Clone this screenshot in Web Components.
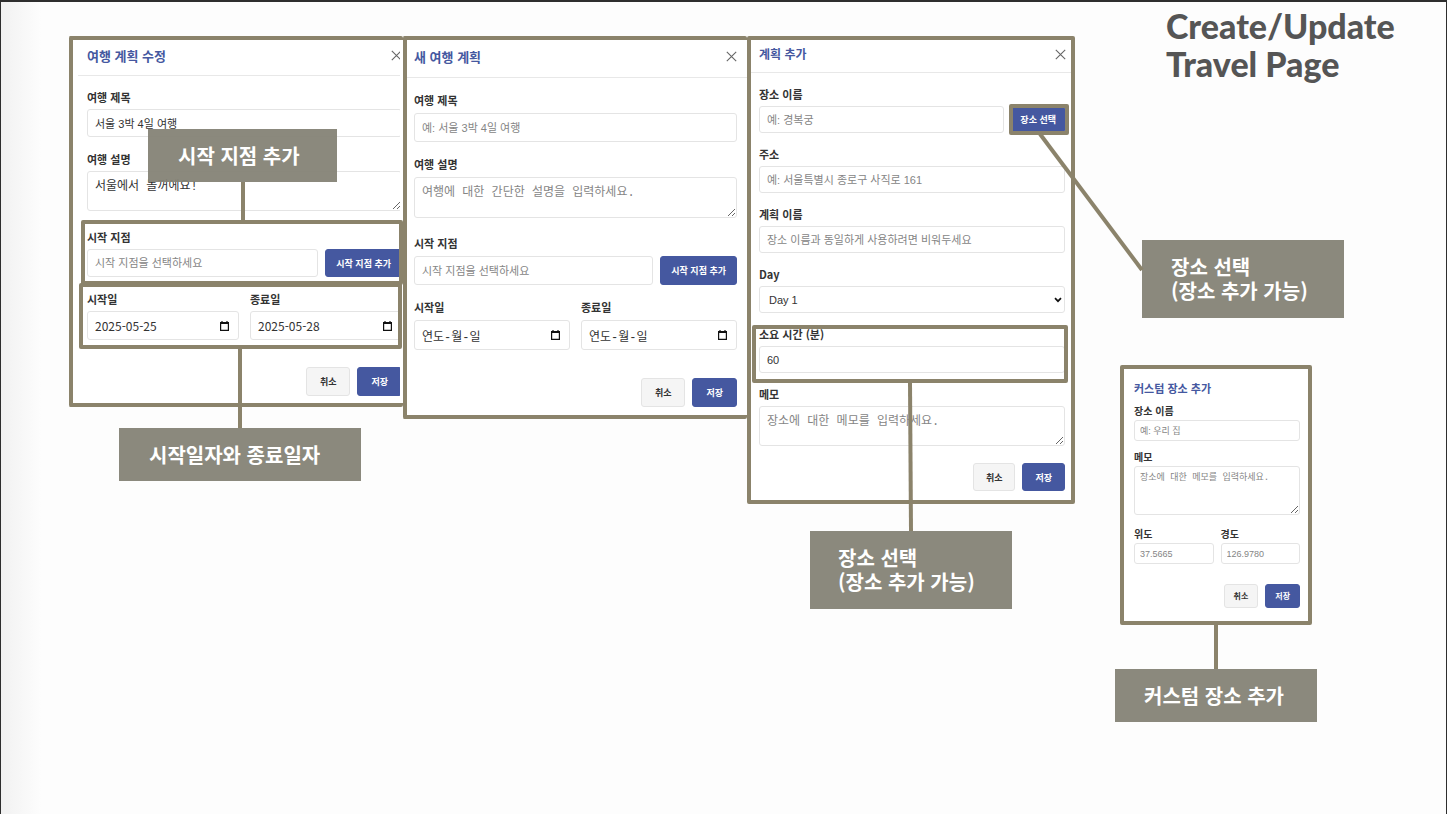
<!DOCTYPE html>
<html lang="ko">
<head>
<meta charset="utf-8">
<title>Create/Update Travel Page</title>
<style>
  html, body { margin: 0; min-height: 100%; }
  body { font-family: "Noto Sans CJK KR", sans-serif; color: #333; background: #fdfdfd; }
</style>
</head>
<body>
<travel-board></travel-board>

<script>
const define = (name, html, setup) => {
  const template = document.createElement('template');
  template.innerHTML = html;
  customElements.define(name, class extends HTMLElement {
    constructor() {
      super();
      this.attachShadow({ mode: 'open' }).append(template.content.cloneNode(true));
    }
    connectedCallback() { if (setup) setup(this, this.shadowRoot); }
  });
};

/* Push button: primary by default, "plain" for the grey one */
define('plan-button', `
  <style>
    :host { display: block; flex: none; }
    button {
      box-sizing: border-box; display: block; height: var(--button-height, 29px); margin: 0;
      padding: 0 var(--button-pad, 13px); border: 1px solid #4558a0; border-radius: 3px;
      background: #4558a0; color: #fff; font: bold var(--button-font, 9px)/1 "Noto Sans CJK KR", sans-serif;
      white-space: nowrap;
    }
    :host([plain]) button { background: #f5f5f5; border-color: #e4e4e4; color: #333; }
  </style>
  <button type="button"><slot></slot></button>`);

/* Label with its control: text, date, select or textarea */
define('form-field', `
  <style>
    :host { display: block; flex: 1; min-width: 0; }
    label {
      display: block; height: var(--label-height, 16px); margin-bottom: var(--label-gap, 4px);
      font-weight: bold; font-size: var(--label-font, 11px); line-height: var(--label-height, 16px); white-space: nowrap;
    }
    .row { display: flex; gap: 7px; }
    .box { position: relative; flex: 1; min-width: 0; }
    input, select, textarea {
      box-sizing: border-box; display: block; width: 100%; height: var(--input-height, 28px); margin: 0;
      padding: 0 7px; border: 1px solid #e4e4e4; border-radius: 3px; background: #fff; color: #333; outline: none;
      font: var(--input-font, 11px) "Liberation Sans", "Noto Sans CJK KR", sans-serif;
    }
    input.small, textarea.small { padding-left: 5px; padding-right: 5px; }
    input::placeholder, textarea::placeholder { color: #858585; opacity: 1; }
    select { appearance: none; padding-left: 9px; }
    textarea {
      height: var(--area-height, 40px); padding-top: 7px; resize: vertical; overflow: hidden;
      font: var(--area-font, 12px)/16px "Liberation Mono", "Noto Sans CJK KR", monospace;
    }
    textarea.small { padding-top: 3px; }
    input.date { height: var(--date-height, 29px); padding-right: 24px; font: 12px "Noto Sans CJK KR", sans-serif; }
    input.date::placeholder { color: #333; font-family: "Liberation Mono", "Noto Sans CJK KR", monospace; }
    .picker { position: absolute; top: 50%; right: 9px; width: 11px; height: 12px; margin-top: -6px; padding: 0; border: 0; background: none; }
    .arrow { position: absolute; top: 50%; right: 3px; width: 8px; height: 6px; margin-top: -3px; pointer-events: none; }
    svg { display: block; }
  </style>
  <label for="control"></label>
  <div class="row"><div class="box"></div><slot></slot></div>`,
(host, root) => {
  const kind = host.getAttribute('kind') || 'text';
  const box = root.querySelector('.box');
  root.querySelector('label').textContent = host.getAttribute('label');
  const control = document.createElement(kind === 'select' ? 'select' : kind === 'area' ? 'textarea' : 'input');
  control.id = 'control';
  const value = host.getAttribute('value');
  if (kind === 'select') {
    control.add(new Option(value));
  } else {
    if (kind !== 'area') control.type = 'text';
    control.placeholder = host.getAttribute('placeholder') || '';
    if (value) control.value = value;
  }
  if (kind === 'date') control.classList.add('date');
  if (host.hasAttribute('small')) control.classList.add('small');
  box.replaceChildren(control);
  if (kind === 'date') box.insertAdjacentHTML('beforeend', `
    <button class="picker" type="button" aria-label="달력"><svg width="11" height="12" viewBox="0 0 11 12">
      <path d="M1.6 2.5h7.8v7.9H1.6z" fill="none" stroke="#111" stroke-width="1.2"/><path d="M1 2h9v2H1zM2.4 1h1.2v1.5H2.4zM7.4 1h1.2v1.5H7.4z" fill="#111"/></svg></button>`);
  if (kind === 'select') box.insertAdjacentHTML('beforeend', `
    <svg class="arrow" viewBox="0 0 8 6"><path d="M1 1.2l3 3 3-3" fill="none" stroke="#111" stroke-width="1.7"/></svg>`);
});

/* Dialog: heading bar with close button, stacked fields, action buttons */
define('plan-dialog', `
  <style>
    :host { display: block; border: 4px solid #8b836b; border-radius: 2px; background: #fff; }
    .clip { overflow: hidden; margin-right: var(--clip, 0px); }
    header {
      box-sizing: border-box; display: flex; align-items: center; justify-content: space-between;
      height: var(--head-height, 36px); margin-left: var(--head-inset, 0px); margin-right: var(--bleed, 0px); border-bottom: 1px solid #e8e8e8;
      padding: 0 var(--head-right, 10px) 4px calc(var(--left, 14px) - var(--head-inset, 0px));
    }
    h2 { margin: 0; color: #4558a0; font-size: var(--head-font, 13px); line-height: 20px; font-weight: bold; }
    header button { width: 11px; height: 11px; padding: 0; border: 0; background: none; }
    svg { display: block; }
    form { display: flex; flex-direction: column; gap: var(--field-gap, 14px); padding: var(--form-top, 13px) var(--right, 0px) 0 var(--left, 14px); margin-right: var(--bleed, 0px); }
    footer { display: flex; justify-content: flex-end; gap: 7px; padding: var(--foot-top, 27px) var(--right, 0px) var(--foot-bottom, 7px) 0; margin-right: var(--bleed, 0px); }
    :host([compact]) header { border: 0; padding: 8px 0 0 10px; }
    :host([compact]) header button { display: none; }
    :host([compact]) form { padding-top: 6px; }
  </style>
  <div class="clip">
    <header><h2></h2><button type="button" aria-label="닫기"><svg width="11" height="11" viewBox="0 0 11 11"><path d="M.8.8l9.4 9.4M10.2.8L.8 10.2" stroke="#666" stroke-width="1.1"/></svg></button></header>
    <form><slot></slot></form>
    <footer><slot name="actions"></slot></footer>
  </div>`,
(host, root) => { root.querySelector('h2').textContent = host.getAttribute('heading'); });

define('field-pair', `
  <style>:host { display: flex; gap: var(--pair-gap, 11px); }</style><slot></slot>`);

define('callout-note', `
  <style>
    :host {
      box-sizing: border-box; display: flex; flex-direction: column; justify-content: center; padding: 15px 30px 14px;
      background: rgba(132, 130, 117, .94); color: #fff; font-weight: bold; font-size: 20px; line-height: 24px; white-space: nowrap;
    }
  </style><slot></slot>`);

define('mark-box', `
  <style>:host { box-sizing: border-box; display: block; border: 4px solid #8b836b; border-radius: 2px; pointer-events: none; }</style>`);

define('link-line', `
  <style>:host { display: block; pointer-events: none; } svg { display: block; overflow: visible; }</style>
  <svg width="1" height="1"><polyline fill="none" stroke="#8b836b" stroke-width="4"/></svg>`,
(host, root) => { root.querySelector('polyline').setAttribute('points', host.getAttribute('points')); });

define('travel-board', `
  <style>
    :host {
      box-sizing: border-box; display: grid; grid-template-columns: 334fr 344fr 328fr 371fr; align-items: start;
      min-height: 100vh; padding-left: 68px; border: solid #2e2e2e; border-width: 2px 1px 0;
      background: linear-gradient(90deg, #f1f1f1, #fdfdfd 40px);
    }
    .cell { position: relative; margin-top: 34px; }
    .edit { --clip: 3px; --bleed: -2px; --head-inset: 5px; --head-right: 0px; }
    .edit plan-dialog, .new plan-dialog { border-right: 0; }
    .area { margin-bottom: 4px; }
    .new {
      --left: 7px; --right: 10px; --head-height: 38px; --form-top: 14px; --label-gap: 5px; --input-height: 29px; --area-height: 41px;
      --date-height: 30px; --foot-top: 28px; --foot-bottom: 8px;
    }
    .new .area { margin-bottom: 3px; }
    .edit .start { --button-height: 28px; --button-pad: 10px; }
    .new .start { --button-pad: 10px; }
    .place {
      --left: 8px; --right: 6px; --head-height: 33px; --head-font: 12px; --head-right: 5px; --input-height: 27px; --field-gap: 13px;
      --button-height: 28px; --button-pad: 12px; --foot-top: 17px; --foot-bottom: 9px;
    }
    .place .pick { --button-height: 27px; --button-pad: 8px; }
    .place .area { margin-bottom: 0; }

    aside { padding-top: 5px; }
    h1 { margin: 0 0 157px 91px; color: #555; font: 900 34px/38px Lato, sans-serif; white-space: nowrap; }
    aside > callout-note { width: 202px; padding-left: 29px; padding-right: 0; }
    aside > .pick-note { margin-left: 67px; padding-bottom: 15px; }
    .custom {
      width: 192px; margin: 47px 0 0 45px; box-sizing: border-box;
      --left: 10px; --right: 8px; --head-height: 29px; --head-font: 11px; --label-font: 10px; --label-height: 14px; --label-gap: 2px;
      --input-height: 21px; --input-font: 9px; --area-height: 49px; --area-font: 9px; --field-gap: 9px; --pair-gap: 7px;
      --button-height: 24px; --button-font: 8px; --button-pad: 9px; --foot-top: 20px; --foot-bottom: 13px;
    }
    .custom .area { margin-bottom: 3px; }
    .stem { width: 4px; height: 44px; margin-left: 139px; background: #8b836b; }
    .custom-note { margin-left: 40px; }

    /* annotations drawn over the dialogs */
    .cell > callout-note, .cell > mark-box, .cell > link-line { position: absolute; }
    .cell > link-line { left: 0; top: 0; }
    .start-note { left: 79px; top: 93px; width: 189px; }
    .date-note { left: 50px; top: 392px; width: 242px; }
    .start-box { left: 12px; right: 0; top: 184px; height: 65px; }
    .date-box { left: 10px; right: 1px; top: 247px; height: 66px; }
    .pick-box { right: 6px; top: 68px; width: 60px; height: 31px; }
    .time-box { left: 5px; right: 7px; top: 289px; height: 58px; }
    .time-note { left: 63px; top: 495px; width: 202px; padding: 15px 0 15px 28px; }
  </style>

  <div class="cell edit">
    <plan-dialog heading="여행 계획 수정">
      <form-field label="여행 제목" value="서울 3박 4일 여행"></form-field>
      <form-field class="area" kind="area" label="여행 설명" value="서울에서 놀꺼에요!"></form-field>
      <form-field class="start" label="시작 지점" placeholder="시작 지점을 선택하세요"><plan-button>시작 지점 추가</plan-button></form-field>
      <field-pair>
        <form-field kind="date" label="시작일" value="2025-05-25"></form-field>
        <form-field kind="date" label="종료일" value="2025-05-28"></form-field>
      </field-pair>
      <plan-button slot="actions" plain>취소</plan-button>
      <plan-button slot="actions">저장</plan-button>
    </plan-dialog>
    <mark-box class="start-box"></mark-box>
    <mark-box class="date-box"></mark-box>
    <link-line points="174,146 174,186"></link-line>
    <link-line points="171,311 171,392"></link-line>
    <callout-note class="start-note">시작 지점 추가</callout-note>
    <callout-note class="date-note">시작일자와 종료일자</callout-note>
  </div>

  <div class="cell new">
    <plan-dialog heading="새 여행 계획">
      <form-field label="여행 제목" placeholder="예: 서울 3박 4일 여행"></form-field>
      <form-field class="area" kind="area" label="여행 설명" placeholder="여행에 대한 간단한 설명을 입력하세요."></form-field>
      <form-field class="start" label="시작 지점" placeholder="시작 지점을 선택하세요"><plan-button>시작 지점 추가</plan-button></form-field>
      <field-pair>
        <form-field kind="date" label="시작일" placeholder="연도-월-일"></form-field>
        <form-field kind="date" label="종료일" placeholder="연도-월-일"></form-field>
      </field-pair>
      <plan-button slot="actions" plain>취소</plan-button>
      <plan-button slot="actions">저장</plan-button>
    </plan-dialog>
  </div>

  <div class="cell place">
    <plan-dialog heading="계획 추가">
      <form-field class="pick" label="장소 이름" placeholder="예: 경복궁"><plan-button>장소 선택</plan-button></form-field>
      <form-field label="주소" placeholder="예: 서울특별시 종로구 사직로 161"></form-field>
      <form-field label="계획 이름" placeholder="장소 이름과 동일하게 사용하려면 비워두세요"></form-field>
      <form-field kind="select" label="Day" value="Day 1"></form-field>
      <form-field label="소요 시간 (분)" value="60"></form-field>
      <form-field class="area" kind="area" label="메모" placeholder="장소에 대한 메모를 입력하세요."></form-field>
      <plan-button slot="actions" plain>취소</plan-button>
      <plan-button slot="actions">저장</plan-button>
    </plan-dialog>
    <mark-box class="pick-box"></mark-box>
    <mark-box class="time-box"></mark-box>
    <link-line points="293,98 395,234"></link-line>
    <link-line points="163,346 164,495"></link-line>
    <callout-note class="time-note"><span>장소 선택</span><span>(장소 추가 가능)</span></callout-note>
  </div>

  <aside>
    <h1>Create/Update<br>Travel Page</h1>
    <callout-note class="pick-note"><span>장소 선택</span><span>(장소 추가 가능)</span></callout-note>
    <plan-dialog class="custom" compact heading="커스텀 장소 추가">
      <form-field small label="장소 이름" placeholder="예: 우리 집"></form-field>
      <form-field small class="area" kind="area" label="메모" placeholder="장소에 대한 메모를 입력하세요."></form-field>
      <field-pair>
        <form-field small label="위도" placeholder="37.5665"></form-field>
        <form-field small label="경도" placeholder="126.9780"></form-field>
      </field-pair>
      <plan-button slot="actions" plain>취소</plan-button>
      <plan-button slot="actions">저장</plan-button>
    </plan-dialog>
    <div class="stem"></div>
    <callout-note class="custom-note">커스텀 장소 추가</callout-note>
  </aside>`);
</script>
</body>
</html>
